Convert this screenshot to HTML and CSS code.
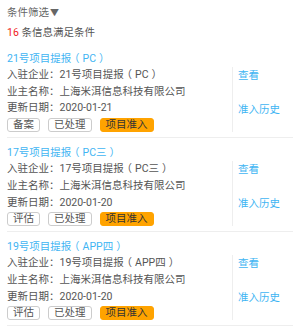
FILE: index.html
```html
<!DOCTYPE html>
<html lang="zh">
<head>
<meta charset="utf-8">
<link rel="stylesheet" href="styles.css">
</head>
<body>
<div class="header">
  <div class="filter">条件筛选<span class="arrow">▼</span></div>
  <div class="count"><span class="num">16</span> 条信息满足条件</div>
</div>

<div class="card">
  <div class="title">21号项目提报<span class="p">（</span>PC<span class="p">）</span></div>
  <div class="body">
    <div class="info">
      <div class="line">入驻企业：21号项目提报<span class="p">（</span>PC<span class="p">）</span></div>
      <div class="line">业主名称：上海米洱信息科技有限公司</div>
      <div class="line">更新日期：2020-01-21</div>
      <div class="btns">
        <span class="btn">备案</span>
        <span class="btn">已处理</span>
        <span class="btn btn-primary">项目准入</span>
      </div>
    </div>
    <div class="actions">
      <div class="link">查看</div>
      <div class="link">准入历史</div>
    </div>
  </div>
</div>

<div class="card">
  <div class="title">17号项目提报<span class="p">（</span>PC三<span class="p">）</span></div>
  <div class="body">
    <div class="info">
      <div class="line">入驻企业：17号项目提报<span class="p">（</span>PC三<span class="p">）</span></div>
      <div class="line">业主名称：上海米洱信息科技有限公司</div>
      <div class="line">更新日期：2020-01-20</div>
      <div class="btns">
        <span class="btn">评估</span>
        <span class="btn">已处理</span>
        <span class="btn btn-primary">项目准入</span>
      </div>
    </div>
    <div class="actions">
      <div class="link">查看</div>
      <div class="link">准入历史</div>
    </div>
  </div>
</div>

<div class="card">
  <div class="title">19号项目提报<span class="p">（</span>APP四<span class="p">）</span></div>
  <div class="body">
    <div class="info">
      <div class="line">入驻企业：19号项目提报<span class="p">（</span>APP四<span class="p">）</span></div>
      <div class="line">业主名称：上海米洱信息科技有限公司</div>
      <div class="line">更新日期：2020-01-20</div>
      <div class="btns">
        <span class="btn">评估</span>
        <span class="btn">已处理</span>
        <span class="btn btn-primary">项目准入</span>
      </div>
    </div>
    <div class="actions">
      <div class="link">查看</div>
      <div class="link">准入历史</div>
    </div>
  </div>
</div>
</body>
</html>
```

FILE: styles.css
```css
html, body {
  margin: 0;
  padding: 0;
  background: #fff;
}
body {
  font-family: Roboto, "Noto Sans CJK TC", "Noto Sans", sans-serif;
  font-size: 10.5px;
  color: #555;
  overflow: hidden;
}
.p {
  font-feature-settings: "halt";
  padding: 0 3px;
}
.header {
  padding: 3px 7px 0;
}
.filter, .count {
  line-height: 19px;
  white-space: nowrap;
}
.filter {
  color: #666;
}
.arrow {
  font-size: 9px;
  margin-left: 1px;
}
.num {
  color: #f01c1c;
}
.card {
  margin: 0 7px;
  padding: 8px 0 5px;
  border-bottom: 1px solid #eee;
}
.card + .card {
  padding-top: 6px;
}
.title {
  color: #3fb5f3;
  line-height: 17px;
  white-space: nowrap;
}
.body {
  display: flex;
}
.info {
  width: 225px;
  flex: none;
  overflow: hidden;
}
.line {
  line-height: 16.7px;
  white-space: nowrap;
}
.btns {
  display: flex;
  gap: 8px;
  margin-top: 1px;
}
.btn {
  height: 12px;
  line-height: 12px;
  padding: 0 5px;
  border: 1px solid #ccc;
  border-radius: 3px;
  color: #555;
}
.btn-primary {
  background: #ffa300;
  border-color: #ffa300;
  color: #333;
}
.actions {
  flex: 1;
  border-left: 1px solid #eee;
  padding-left: 5px;
  display: flex;
  flex-direction: column;
  gap: 17px;
}
.link {
  color: #3fb5f3;
  line-height: 17px;
}
```
